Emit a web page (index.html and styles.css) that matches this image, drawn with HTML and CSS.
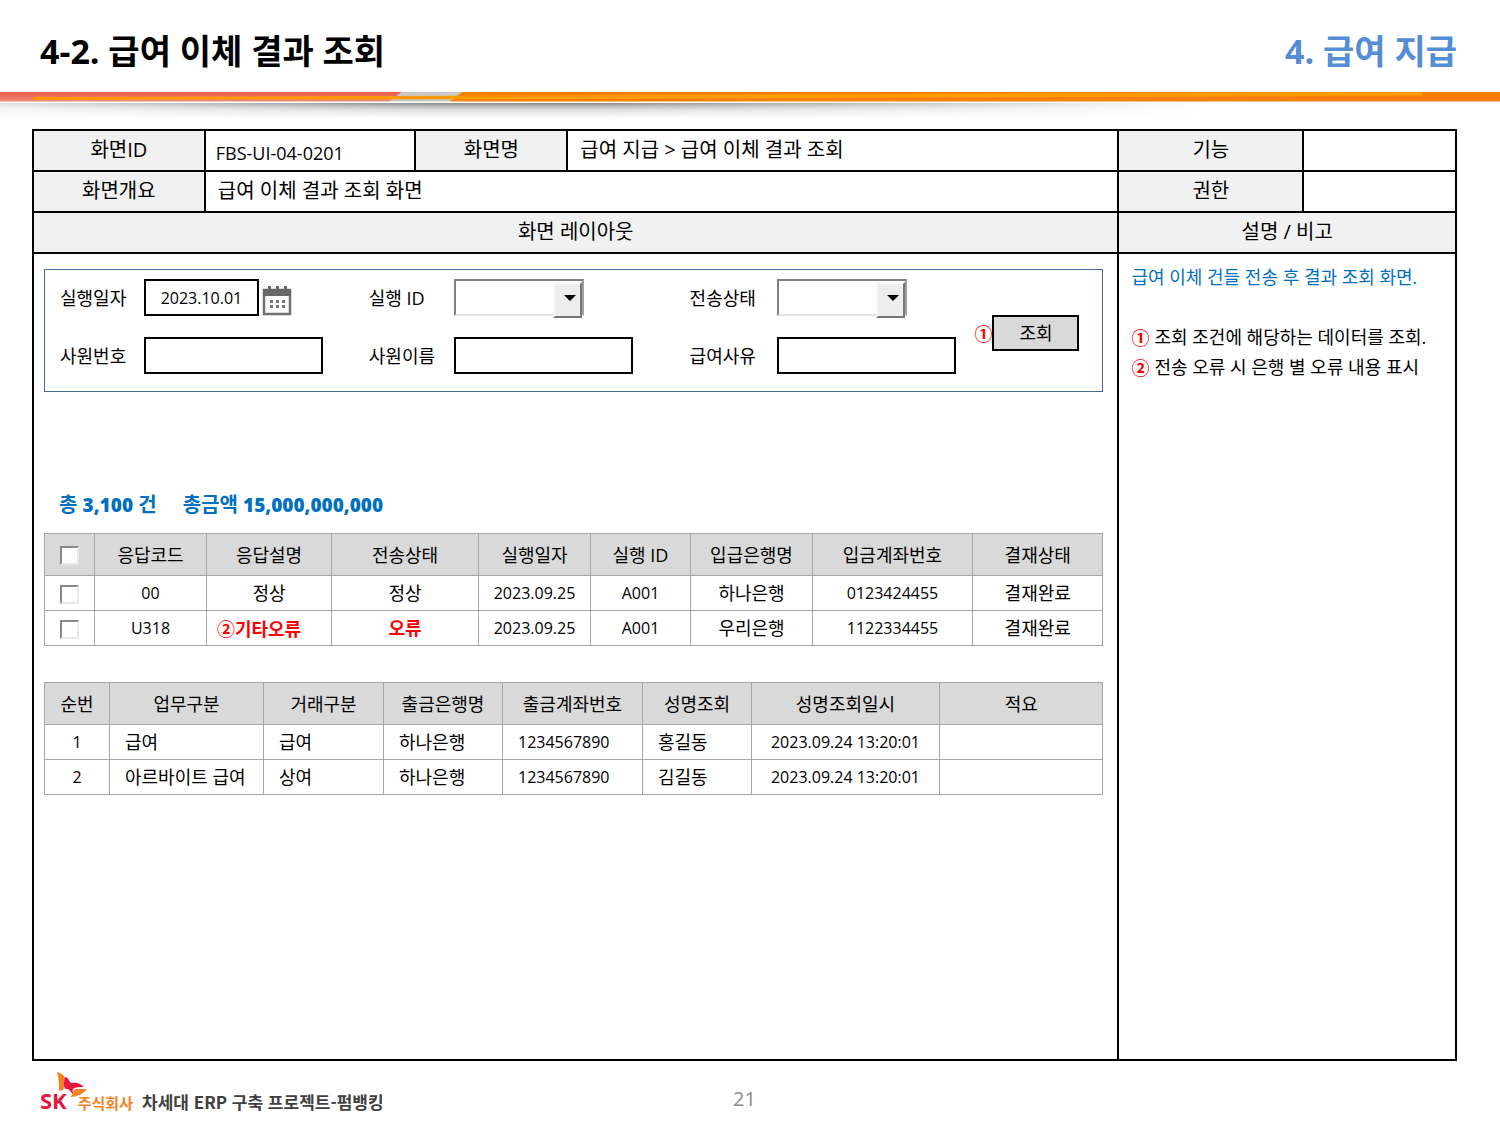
FILE: index.html
```html
<!DOCTYPE html>
<html lang="ko">
<head>
<meta charset="utf-8">
<title>급여 이체 결과 조회</title>
<link rel="stylesheet" href="styles.css">
</head>
<body>
<header class="top">
  <h1>4-2. 급여 이체 결과 조회</h1>
  <p class="chapter">4. 급여 지급</p>
</header>
<svg class="rule" viewBox="0 0 1500 32" preserveAspectRatio="none" aria-hidden="true">
  <defs>
    <linearGradient id="red" x1="0" x2="0" y1="0" y2="1"><stop offset="0" stop-color="#ea5c4a"/><stop offset="1" stop-color="#f08a78"/></linearGradient>
    <linearGradient id="shade" x1="0" x2="0" y1="0" y2="1"><stop offset="0" stop-color="#777" stop-opacity=".85"/><stop offset=".4" stop-color="#999" stop-opacity=".35"/><stop offset="1" stop-color="#bbb" stop-opacity="0"/></linearGradient>
    <linearGradient id="fade" x1="0" x2="1" y1="0" y2="0"><stop offset="0" stop-color="#fff" stop-opacity=".25"/><stop offset=".35" stop-color="#fff"/><stop offset=".5" stop-color="#fff"/><stop offset="1" stop-color="#fff" stop-opacity="0"/></linearGradient>
    <mask id="ends"><rect width="1200" height="32" fill="url(#fade)"/></mask>
  </defs>
  <rect y="11" width="1200" height="16" fill="url(#shade)" mask="url(#ends)"/>
  <path d="M0 0H402L390 9.500H0z" fill="url(#red)"/>
  <path d="M402 0H462L451 9.500H390z" fill="#c8c8c6"/>
  <path d="M462 0H1500V9.500H450z" fill="#f67f04"/>
  <path d="M33 5L400 4L1422 0V3.500L600 7L33 8z" fill="#ff9a00"/>
</svg>
<main class="sheet">
  <div class="cell head">화면ID</div>
  <div class="cell code">FBS-UI-04-0201</div>
  <div class="cell head">화면명</div>
  <div class="cell">급여 지급 &gt; 급여 이체 결과 조회</div>
  <div class="cell head">기능</div>
  <div class="cell"></div>
  <div class="cell head">화면개요</div>
  <div class="cell overview">급여 이체 결과 조회 화면</div>
  <div class="cell head">권한</div>
  <div class="cell"></div>
  <h2 class="cell head layout-title">화면 레이아웃</h2>
  <h2 class="cell head note-title">설명 / 비고</h2>

  <section class="layout">
    <form class="search">
      <label for="run-date">실행일자</label>
      <div class="field">
        <input id="run-date" class="box date" value="2023.10.01">
        <button type="button" class="calendar" aria-label="달력">
          <svg width="30" height="30" viewBox="0 0 30 30"><path d="M2 4H28V28H2z" fill="#fff" stroke="#707070" stroke-width="2.500"/><path d="M1 3H29V10H1z" fill="#666"/><path d="M6 0h3v4H6zM14 0h3v4h-3zM22 0h3v4h-3z" fill="#666"/><path d="M8 14h3v3H8zM14 14h3v3h-3zM20 14h3v3h-3zM8 19h3v3H8zM14 19h3v3h-3zM20 19h3v3h-3z" fill="#777"/></svg>
        </button>
      </div>
      <label for="run-id">실행 ID</label>
      <div class="field"><div class="combo"><select id="run-id"><option></option></select></div></div>
      <label for="status">전송상태</label>
      <div class="field"><div class="combo"><select id="status"><option></option></select></div></div>
      <div class="action"><span class="mark">①</span><button type="submit" class="query">조회</button></div>
      <label for="emp-no">사원번호</label>
      <div class="field"><input id="emp-no" class="box"></div>
      <label for="emp-name">사원이름</label>
      <div class="field"><input id="emp-name" class="box"></div>
      <label for="reason">급여사유</label>
      <div class="field"><input id="reason" class="box"></div>
    </form>

    <p class="total"><span>총 <b>3,100</b> 건</span><span>총금액 <b>15,000,000,000</b></span></p>

    <table class="grid results">
      <colgroup><col class="r1"><col class="r2"><col class="r3"><col class="r4"><col class="r5"><col class="r6"><col class="r7"><col class="r8"><col class="r9"></colgroup>
      <thead><tr><th><input type="checkbox" aria-label="전체 선택"></th><th>응답코드</th><th>응답설명</th><th>전송상태</th><th>실행일자</th><th>실행 ID</th><th>입급은행명</th><th>입금계좌번호</th><th>결재상태</th></tr></thead>
      <tbody>
        <tr><td><input type="checkbox" aria-label="00 선택"></td><td class="num">00</td><td>정상</td><td>정상</td><td class="num">2023.09.25</td><td class="num">A001</td><td>하나은행</td><td class="num">0123424455</td><td>결재완료</td></tr>
        <tr><td><input type="checkbox" aria-label="U318 선택"></td><td class="num">U318</td><td class="error marked"><span class="mark">②</span>기타오류</td><td class="error">오류</td><td class="num">2023.09.25</td><td class="num">A001</td><td>우리은행</td><td class="num">1122334455</td><td>결재완료</td></tr>
      </tbody>
    </table>

    <table class="grid details">
      <colgroup><col class="d1"><col class="d2"><col class="d3"><col class="d4"><col class="d5"><col class="d6"><col class="d7"><col class="d8"></colgroup>
      <thead><tr><th>순번</th><th>업무구분</th><th>거래구분</th><th>출금은행명</th><th>출금계좌번호</th><th>성명조회</th><th>성명조회일시</th><th>적요</th></tr></thead>
      <tbody>
        <tr><td class="num center">1</td><td>급여</td><td>급여</td><td>하나은행</td><td class="num">1234567890</td><td>홍길동</td><td class="num center">2023.09.24 13:20:01</td><td></td></tr>
        <tr><td class="num center">2</td><td>아르바이트 급여</td><td>상여</td><td>하나은행</td><td class="num">1234567890</td><td>김길동</td><td class="num center">2023.09.24 13:20:01</td><td></td></tr>
      </tbody>
    </table>
  </section>

  <aside class="notes">
    <p class="lead">급여 이체 건들 전송 후 결과 조회 화면.</p>
    <ol>
      <li><span class="mark">①</span>조회 조건에 해당하는 데이터를 조회.</li>
      <li><span class="mark">②</span>전송 오류 시 은행 별 오류 내용 표시</li>
    </ol>
  </aside>
</main>
<footer class="bottom">
  <div class="brand">
    <svg class="wings" width="32" height="26" viewBox="0 0 32 26" aria-hidden="true"><path d="M1 0C5 1 8 3 9 6C7 9 9 13 7 18L3 19C3 12 3 6 1 0z" fill="#f58220"/><path d="M9 5C14 6 12 10 16 11C21 10 25 12 28 15C23 15 20 15 17 17C16 19 17 21 18 23C14 20 13 16 9 17C7 13 8 9 9 5z" fill="#e5173f"/><path d="M14 25C18 23 16 17 21 17L31 17C27 22 21 25 14 25z" fill="#f58220"/></svg>
    <span class="sk">SK</span><span class="corp">주식회사</span>
  </div>
  <p class="project">차세대 ERP 구축 프로젝트-펌뱅킹</p>
  <p class="page">21</p>
</footer>
</body>
</html>
```
FILE: styles.css
```css
* { box-sizing: border-box; }
body {
  margin: 0;
  background: #fff;
  color: #000;
  font: 18px/24px "Open Sans", "Noto Sans CJK KR", sans-serif;
}
h1, h2, p, ol { margin: 0; }
.top {
  display: flex;
  justify-content: space-between;
  align-items: center;
  height: 92px;
  padding: 10px 43px 0 40px;
}
h1, .chapter { font-size: 34px; line-height: 48px; font-weight: 700; }
.chapter { color: #558ed5; }
.rule { display: block; width: 100%; height: 32px; }

.sheet {
  display: grid;
  grid-template-columns: 170fr 209fr 150fr 550fr 183fr 151fr;
  grid-template-rows: repeat(3, 39px) minmax(805px, auto);
  gap: 2px;
  margin: 5px 43px 0 32px;
  border: 2px solid #000;
  background: #000;
}
.cell {
  display: flex;
  align-items: center;
  padding: 0 12px 1px;
  background: #fff;
  font-size: 20px;
  font-weight: 400;
}
.code { font-size: 18px; padding: 4px 10px 0; }
.head { justify-content: center; background: #f1f1f1; }
.overview { grid-column: 2 / 5; }
.layout-title { grid-column: 1 / 5; }
.note-title { grid-column: 5 / 7; }
.layout { grid-column: 1 / 5; padding: 15px 14px 0 10px; background: #fff; }
.notes { grid-column: 5 / 7; padding: 8px 8px 0 12px; background: #fff; line-height: 30px; }
.lead { color: #0070c0; margin-bottom: 30px; white-space: nowrap; }
.notes ol { list-style: none; padding: 0; }
.notes li { display: flex; gap: 5px; white-space: nowrap; }
.mark { color: #f00; font-family: "Noto Sans CJK KR", sans-serif; font-weight: 700; }

.search {
  display: grid;
  grid-template-columns: 84fr 225fr 85fr 236fr 87fr 179fr 124fr;
  grid-template-rows: 37px 37px;
  row-gap: 21px;
  align-items: center;
  padding: 9px 23px 17px 15px;
  border: 1px solid #46699a;
}
.field { display: flex; align-items: flex-end; gap: 3px; }
.box { width: 179px; height: 37px; border: 2px solid #000; background: #fff; font: inherit; }
.date { width: 115px; text-align: center; font-size: 16px; padding: 0; }
.calendar { width: 30px; height: 30px; padding: 0; border: 0; background: none; }
.calendar svg { display: block; }
.combo { position: relative; width: 130px; height: 37px; }
.combo select {
  appearance: none;
  width: 100%;
  height: 100%;
  border: 2px solid;
  border-color: #808080 #a0a0a0 #e4e4e4 #808080;
  border-radius: 0;
  background: #fff;
}
.combo::before {
  content: "";
  position: absolute;
  top: 3px;
  right: 2px;
  width: 25px;
  height: 32px;
  border: 2px solid;
  border-color: #f8f8f8 #777 #777 #f8f8f8;
  background: #ededed;
  pointer-events: none;
}
.combo::after {
  content: "";
  position: absolute;
  top: 16px;
  right: 8px;
  border: 6px solid transparent;
  border-top-color: #000;
  border-bottom: 0;
  pointer-events: none;
}
.action { grid-row: 1 / 3; grid-column: 7; display: flex; justify-content: flex-end; align-items: center; padding-top: 12px; }
.query { width: 87px; height: 36px; border: 2px solid #000; background: #d9d9d9; color: #000; font: inherit; padding: 0; }

.total { display: flex; gap: 26px; margin: 101px 0 16px 15px; color: #0070c0; font-size: 20px; font-weight: 700; }
.total b { font-size: 19px; }

.grid { width: 100%; table-layout: fixed; border-collapse: collapse; }
.grid th, .grid td { border: 1px solid #a6a6a6; padding: 0; text-align: center; font-weight: 400; white-space: nowrap; }
.grid th { height: 42px; background: #d9d9d9; }
.grid td { height: 35px; }
.grid .num { font-size: 16px; }
.grid .error { color: #f00; font-weight: 700; }
.grid .marked { padding-right: 20px; }
.grid input {
  appearance: none;
  display: block;
  width: 19px;
  height: 19px;
  margin: 2px auto 0;
  border: 2px solid;
  border-color: #888 #e8e8e8 #e8e8e8 #888;
  background: #fff;
}
.details { margin-top: 36px; }
.details td { text-align: left; padding-left: 15px; }
.details .center { text-align: center; padding: 0; }
.r1 { width: 50px; } .r2 { width: 112px; } .r3 { width: 125px; }
.r4 { width: 147px; } .r5 { width: 112px; } .r6 { width: 100px; }
.r7 { width: 122px; } .r8 { width: 160px; }
.d1 { width: 65px; } .d2 { width: 154px; } .d3 { width: 120px; }
.d4 { width: 119px; } .d5 { width: 140px; } .d6 { width: 109px; }
.d7 { width: 188px; }

.bottom { display: grid; grid-template-columns: 102px 1fr 24px 1fr 102px; align-items: end; padding: 11px 50px 0 40px; }
.brand { position: relative; display: flex; align-items: baseline; gap: 11px; padding-top: 16px; }
.wings { position: absolute; left: 16px; top: 0; }
.sk { color: #e5173f; font: 700 22px/24px "Open Sans", sans-serif; }
.corp { color: #f58220; font-size: 15px; font-weight: 700; white-space: nowrap; }
.project { color: #404040; font-family: "Noto Sans CJK KR", sans-serif; font-size: 17px; font-weight: 700; white-space: nowrap; padding-bottom: 1px; }
.page { grid-column: 3; color: #8c8c8c; font-size: 20px; padding-bottom: 4px; }
```
